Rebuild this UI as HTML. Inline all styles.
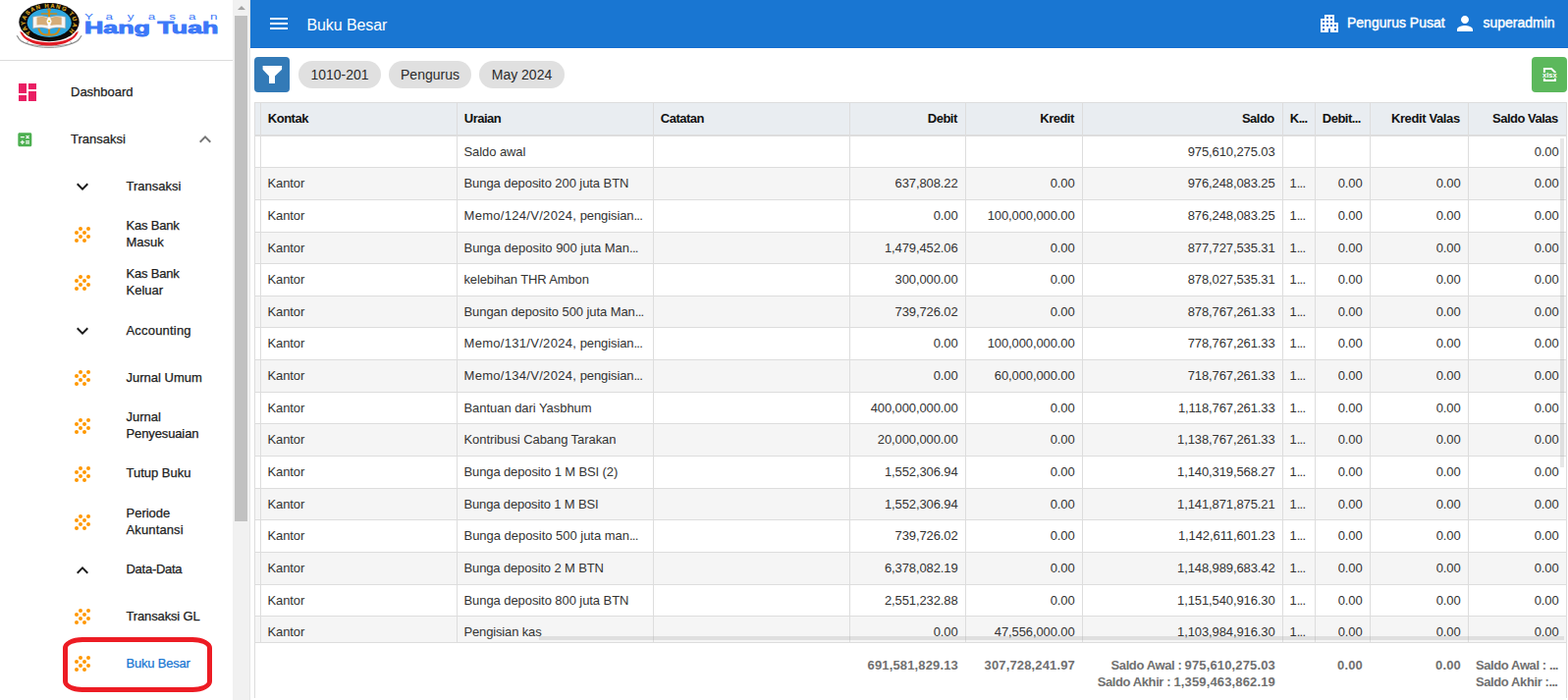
<!DOCTYPE html>
<html lang="id"><head><meta charset="utf-8"><title>Buku Besar</title>
<style>
*{box-sizing:border-box;margin:0;padding:0}
html,body{width:1597px;height:713px;overflow:hidden;background:#fff}
body{font-family:"Liberation Sans",Arial,sans-serif;font-size:13px;color:#212121;position:relative}
#side{position:absolute;left:0;top:0;width:237px;height:713px;background:#fff;overflow:hidden}
#side .div{position:absolute;left:0;top:61px;width:237px;height:1px;background:#dcdcdc}
#side .t1{position:absolute;left:72px;font-size:13px;line-height:20px;white-space:nowrap;-webkit-text-stroke:.25px #212121}
.si{position:absolute;left:72px;width:24px;height:24px}
.st{position:absolute;left:128.5px;font-size:13px;line-height:17px;white-space:nowrap;-webkit-text-stroke:.25px #212121}
.st.act{color:#1976d2;-webkit-text-stroke:.25px #1976d2}
.ic{display:block}
#sbar{position:absolute;left:237px;top:0;width:17px;height:713px;background:#f1f1f1}
#sbar:after{content:"";position:absolute;left:17px;top:0;width:1px;height:713px;background:#e6e6e6}
#sbar .th{position:absolute;left:2px;top:16px;width:13px;height:515px;background:#c1c1c1}
#sbar .ar{position:absolute;left:5px;top:6px;width:0;height:0;border-left:4px solid transparent;border-right:4px solid transparent;border-bottom:4px solid #a3a3a3}
#top{position:absolute;left:255px;top:0;width:1342px;height:49px;background:#1976d2;color:#fff;box-shadow:inset 0 -1px 0 #126cd0}
#top .ttl{position:absolute;left:57.5px;top:15.4px;letter-spacing:-.1px;font-size:16px;line-height:22px;white-space:nowrap}
#top .tx{position:absolute;top:13.3px;font-size:14px;line-height:20px;white-space:nowrap;-webkit-text-stroke:.4px #fff}
#top svg{position:absolute}
#fbtn{position:absolute;left:259px;top:58px;width:36px;height:36px;border-radius:4px;background:#337ab7}
#xbtn{position:absolute;left:1560px;top:58px;width:36px;height:36px;border-radius:4px;background:#5cb85c}
.chip{position:absolute;top:62px;height:28px;border-radius:14px;background:#e0e0e0;font-size:14px;line-height:28px;text-align:center;color:#2b2b2b;white-space:nowrap}
#grid{position:absolute;left:259px;top:104px;width:1337px;height:607px;border:1px solid #ddd;border-bottom:none;overflow:hidden;color:#333}
#grid>*, #body>*, #foot>*{position:absolute}
#grid{--o:-1px}
.hdbg{left:-1px;top:0;width:1337px;height:32px;background:#e9edf1}
#body{left:-1px;top:-1px;width:1337px;height:550px;overflow:hidden}
.row{left:0;width:1337px;background:#fff}
.row.alt{background:#f5f5f5}
.hl{left:0;width:1337px;height:1px;background:#ddd}
.hl2{left:-1px;width:1337px;height:1px;background:#ddd}
.vl{top:-1px;width:1px;height:550px;background:#ddd;margin-left:-1px}
.c{padding:0 7px;white-space:nowrap;overflow:hidden;font-size:13px;letter-spacing:-.1px}
.c.r,.f.r{text-align:right}
.c.r{padding-right:7.4px}
.c u{text-decoration:none}
.c.l{padding-left:6.5px}
.c.h{font-weight:bold;color:#111;letter-spacing:-.5px;margin-left:-.7px}
.c.h.r{margin-left:-1.8px}
.e{font-weight:inherit;letter-spacing:-.7px}
#foot{left:-1px;top:549px;width:1337px;height:59px;background:#fff;border-top:1px solid #ddd}
.f{padding:0 7px;font-weight:bold;color:#707070;font-size:13px;line-height:17px;white-space:nowrap;overflow:hidden;letter-spacing:.15px}
.f em{font-style:normal;letter-spacing:-.4px}
.vsb{left:1329px;top:36px;width:4px;height:335px;background:rgba(160,160,160,.25)}
.hsb{left:289px;top:543px;width:1044px;height:4px;background:rgba(160,160,160,.25)}
#hl{position:absolute;left:64px;top:649px;width:152px;height:56px;border:5px solid #ed1c24;border-radius:20px / 11px}
</style></head><body>
<div id="side">
  <svg id="logo" style="position:absolute;left:0;top:0" width="237" height="60" viewBox="0 0 237 60">
  <defs>
    <path id="ringp" d="M31.600 33.200 A24.400 15.400 0 1 1 68.400 33.200"/>
  </defs>
  <!-- white ribbon -->
  <path d="M17.300 36.300 C25 52.600 75 52.600 82.900 36.300 L80.600 40.500 C74 49 26 49 19.600 40.500 Z" fill="#fcfcfc" stroke="#7d7d7d" stroke-width="0.800" stroke-linejoin="round"/>
  <path d="M27.300 44.600 l1.200 -2.400 M72.900 44.600 l-1.200 -2.400" stroke="#7d7d7d" stroke-width="0.700" fill="none"/>
  <!-- red ribbon -->
  <path d="M20.300 31.800 C25.500 51.400 74.500 51.400 79.900 31.800 L77 33.600 C71.500 46.300 28.500 46.300 23.200 33.600 Z" fill="#e01b24"/>
  <!-- black ring -->
  <ellipse cx="50" cy="22.600" rx="30.700" ry="19.600" fill="#0b0b0b"/>
  <ellipse cx="50.200" cy="23.200" rx="22.600" ry="14.700" fill="#2ea7e0"/>
  <text font-family="Liberation Sans,Arial,sans-serif" font-weight="bold" font-size="5.900" fill="#dba622" stroke="#dba622" stroke-width="0.150"><textPath href="#ringp" startOffset="0" textLength="85" lengthAdjust="spacing">YAYASAN HANG TUAH</textPath></text>
  <!-- anchor -->
  <g fill="none" stroke="#c98a1b" stroke-linecap="round">
    <path d="M50 10.500V35" stroke-width="2.200"/>
    <path d="M42.500 14H57.500" stroke-width="1.700"/>
    <circle cx="50" cy="10.300" r="1.500" stroke-width="1"/>
    <path d="M39.500 29.500 C41.500 35.500 46 36 50 35.200 C54 36 58.500 35.500 60.500 29.500" stroke-width="2.200"/>
  </g>
  <!-- book -->
  <path d="M33.500 17.200 C39 15.600 45.500 15.800 50 17.800 C54.500 15.800 61 15.600 66.700 17.200 V29 C61 27.600 54.500 27.800 50 29.700 C45.500 27.800 39 27.600 33.500 29 Z" fill="#f4f4f4" stroke="#9a9a9a" stroke-width="0.600"/>
  <path d="M37.500 17.500 C41.500 16.600 45.500 16.900 48.500 18.300 V26 C45.500 25 41.500 24.900 37.500 25.600 Z" fill="#d6ad78"/>
  <path d="M62.700 17.500 C58.500 16.600 54.500 16.900 51.500 18.300 V26 C54.500 25 58.500 24.900 62.700 25.600 Z" fill="#d6ad78"/>
  <path d="M49.200 17.600h1.600v11.600h-1.600z" fill="#fff"/>
  <circle cx="50" cy="21.800" r="2.500" fill="#fff"/>
  <path d="M48.600 21h2.800l-1.400 2z" fill="#d8c21a"/>
  <g font-family="Liberation Sans,Arial,sans-serif" font-size="9" fill="#3c78f8" transform="translate(0 19.900) scale(1.5 1)"><text x="57.40" y="0">Y</text><text x="71.67" y="0">a</text><text x="86.53" y="0">y</text><text x="100.47" y="0">a</text><text x="114.87" y="0">s</text><text x="128.00" y="0">a</text><text x="142.67" y="0">n</text></g>
  <text x="85.900" y="34.400" font-family="Liberation Sans,Arial,sans-serif" font-weight="bold" font-size="16.800" fill="#3c78f8" stroke="#3c78f8" stroke-width="0.900" textLength="136.600" lengthAdjust="spacingAndGlyphs">Hang Tuah</text>
</svg>

  <div class="div"></div>
  <svg style="position:absolute;left:16px;top:82px" viewBox="0 0 24 24" width="24" height="24"><path fill="#e91e63" d="M3 13h8V3H3v10zm0 8h8v-6H3v6zm10 0h8V11h-8v10zm0-18v6h8V3h-8z"/></svg>
  <div class="t1" style="top:83.5px">Dashboard</div>
  <svg style="position:absolute;left:15.67px;top:132.67px" viewBox="0 0 24 24" width="18.67" height="18.67"><path fill="#4caf50" d="M19 3H5c-1.1 0-2 .9-2 2v14c0 1.1.9 2 2 2h14c1.1 0 2-.9 2-2V5c0-1.1-.9-2-2-2zm-5.970 4.060L14.090 6l1.410 1.410L16.910 6l1.060 1.060-1.410 1.410 1.410 1.410-1.060 1.060-1.410-1.400-1.410 1.410-1.060-1.060 1.410-1.410-1.410-1.420zm-6.780.66h5v1.500h-5v-1.500zM11.500 16h-2v2H8v-2H6v-1.500h2v-2h1.500v2h2V16zm6.500 1.250h-5v-1.500h5v1.500zm0-2.500h-5v-1.500h5v1.500z"/></svg>
  <div class="t1" style="top:131.5px">Transaksi</div>
  <svg style="position:absolute;left:197px;top:130px" viewBox="0 0 24 24" width="24" height="24"><path fill="#757575" d="M12 8l-6 6 1.41 1.41L12 10.83l4.59 4.58L18 14z"/></svg>
  <div class="si" style="top:178px"><svg class="ic" viewBox="0 0 24 24" width="24" height="24"><path fill="#1c1c1c" d="M16.59 8.59L12 13.17 7.41 8.59 6 10l6 6 6-6z"/></svg></div><div class="st " style="top:181.1px">Transaksi</div><div class="si" style="top:227px"><svg class="ic" viewBox="0 0 24 24" width="24" height="24"><g fill="#ff9800"><circle cx="10" cy="14" r="2"/><circle cx="6" cy="10" r="2"/><circle cx="6" cy="18" r="2"/><circle cx="18" cy="6" r="2"/><circle cx="14" cy="18" r="2"/><circle cx="18" cy="14" r="2"/><circle cx="14" cy="10" r="2"/><circle cx="10" cy="6" r="2"/></g></svg></div><div class="st " style="top:220.8px"><span style="letter-spacing:-0.2px">Kas Bank</span><br>Masuk</div><div class="si" style="top:276px"><svg class="ic" viewBox="0 0 24 24" width="24" height="24"><g fill="#ff9800"><circle cx="10" cy="14" r="2"/><circle cx="6" cy="10" r="2"/><circle cx="6" cy="18" r="2"/><circle cx="18" cy="6" r="2"/><circle cx="14" cy="18" r="2"/><circle cx="18" cy="14" r="2"/><circle cx="14" cy="10" r="2"/><circle cx="10" cy="6" r="2"/></g></svg></div><div class="st " style="top:270.4px"><span style="letter-spacing:-0.2px">Kas Bank</span><br>Keluar</div><div class="si" style="top:325px"><svg class="ic" viewBox="0 0 24 24" width="24" height="24"><path fill="#1c1c1c" d="M16.59 8.59L12 13.17 7.41 8.59 6 10l6 6 6-6z"/></svg></div><div class="st " style="top:328.0px"><span style="letter-spacing:0.19px">Accounting</span></div><div class="si" style="top:373px"><svg class="ic" viewBox="0 0 24 24" width="24" height="24"><g fill="#ff9800"><circle cx="10" cy="14" r="2"/><circle cx="6" cy="10" r="2"/><circle cx="6" cy="18" r="2"/><circle cx="18" cy="6" r="2"/><circle cx="14" cy="18" r="2"/><circle cx="18" cy="14" r="2"/><circle cx="14" cy="10" r="2"/><circle cx="10" cy="6" r="2"/></g></svg></div><div class="st " style="top:375.9px">Jurnal Umum</div><div class="si" style="top:422px"><svg class="ic" viewBox="0 0 24 24" width="24" height="24"><g fill="#ff9800"><circle cx="10" cy="14" r="2"/><circle cx="6" cy="10" r="2"/><circle cx="6" cy="18" r="2"/><circle cx="18" cy="6" r="2"/><circle cx="14" cy="18" r="2"/><circle cx="18" cy="14" r="2"/><circle cx="14" cy="10" r="2"/><circle cx="10" cy="6" r="2"/></g></svg></div><div class="st " style="top:415.8px">Jurnal<br><span style="letter-spacing:-0.12px">Penyesuaian</span></div><div class="si" style="top:471px"><svg class="ic" viewBox="0 0 24 24" width="24" height="24"><g fill="#ff9800"><circle cx="10" cy="14" r="2"/><circle cx="6" cy="10" r="2"/><circle cx="6" cy="18" r="2"/><circle cx="18" cy="6" r="2"/><circle cx="14" cy="18" r="2"/><circle cx="18" cy="14" r="2"/><circle cx="14" cy="10" r="2"/><circle cx="10" cy="6" r="2"/></g></svg></div><div class="st " style="top:473.4px">Tutup Buku</div><div class="si" style="top:520px"><svg class="ic" viewBox="0 0 24 24" width="24" height="24"><g fill="#ff9800"><circle cx="10" cy="14" r="2"/><circle cx="6" cy="10" r="2"/><circle cx="6" cy="18" r="2"/><circle cx="18" cy="6" r="2"/><circle cx="14" cy="18" r="2"/><circle cx="18" cy="14" r="2"/><circle cx="14" cy="10" r="2"/><circle cx="10" cy="6" r="2"/></g></svg></div><div class="st " style="top:514.0px">Periode<br><span style="letter-spacing:0.13px">Akuntansi</span></div><div class="si" style="top:568.5px"><svg class="ic" viewBox="0 0 24 24" width="24" height="24"><path fill="#1c1c1c" d="M12 8l-6 6 1.41 1.41L12 10.83l4.59 4.58L18 14z"/></svg></div><div class="st " style="top:570.9px"><span style="letter-spacing:-0.27px">Data-Data</span></div><div class="si" style="top:616px"><svg class="ic" viewBox="0 0 24 24" width="24" height="24"><g fill="#ff9800"><circle cx="10" cy="14" r="2"/><circle cx="6" cy="10" r="2"/><circle cx="6" cy="18" r="2"/><circle cx="18" cy="6" r="2"/><circle cx="14" cy="18" r="2"/><circle cx="18" cy="14" r="2"/><circle cx="14" cy="10" r="2"/><circle cx="10" cy="6" r="2"/></g></svg></div><div class="st " style="top:618.9px"><span style="letter-spacing:-0.14px">Transaksi GL</span></div><div class="si" style="top:664px"><svg class="ic" viewBox="0 0 24 24" width="24" height="24"><g fill="#ff9800"><circle cx="10" cy="14" r="2"/><circle cx="6" cy="10" r="2"/><circle cx="6" cy="18" r="2"/><circle cx="18" cy="6" r="2"/><circle cx="14" cy="18" r="2"/><circle cx="18" cy="14" r="2"/><circle cx="14" cy="10" r="2"/><circle cx="10" cy="6" r="2"/></g></svg></div><div class="st act" style="top:667.0px"><span style="letter-spacing:-0.21px">Buku Besar</span></div>
  <div id="hl"></div>
</div>
<div id="sbar"><i class="ar"></i><i class="th"></i></div>
<div id="top">
  <svg style="left:17px;top:12px" viewBox="0 0 24 24" width="24" height="24"><path fill="#fff" d="M3 18h18v-2H3v2zm0-5h18v-2H3v2zm0-7v2h18V6H3z"/></svg>
  <div class="ttl">Buku Besar</div>
  <svg style="left:1087px;top:12px" viewBox="0 0 24 24" width="24" height="24"><path fill="#fff" d="M17 11V3H7v4H3v14h8v-4h2v4h8V11h-4zM7 19H5v-2h2v2zm0-4H5v-2h2v2zm0-4H5V9h2v2zm4 4H9v-2h2v2zm0-4H9V9h2v2zm0-4H9V5h2v2zm4 8h-2v-2h2v2zm0-4h-2V9h2v2zm0-4h-2V5h2v2zm4 12h-2v-2h2v2zm0-4h-2v-2h2v2z"/></svg>
  <div class="tx" style="left:1117px">Pengurus Pusat</div>
  <svg style="left:1225px;top:12px" viewBox="0 0 24 24" width="24" height="24"><path fill="#fff" d="M12 12c2.21 0 4-1.790 4-4s-1.790-4-4-4-4 1.790-4 4 1.790 4 4 4zm0 2c-2.670 0-8 1.340-8 4v2h16v-2c0-2.660-5.330-4-8-4z"/></svg>
  <div class="tx" style="left:1255.5px">superadmin</div>
</div>
<div id="fbtn"><svg viewBox="0 0 36 36" width="36" height="36" style="display:block"><path fill="#fff" d="M8.600 9h19.500v3.700l-7.100 6.800v7.500h-6v-7.500l-6.400-6.800z"/></svg></div>
<div class="chip" style="left:304px;width:84px">1010-201</div>
<div class="chip" style="left:396px;width:84px">Pengurus</div>
<div class="chip" style="left:488px;width:87px">May 2024</div>
<div id="xbtn"><svg viewBox="0 0 36 36" width="36" height="36" style="display:block"><path fill="none" stroke="#fff" stroke-width="2" d="M12.900 16V11.900H20.100L23.900 15.700V16M12.900 21.800V24H23.900V21.800"/><text x="18.300" y="21.200" font-family="Liberation Sans,Arial,sans-serif" font-weight="bold" font-size="6.800" fill="#fff" text-anchor="middle" textLength="14.600" lengthAdjust="spacingAndGlyphs">xlsx</text></svg></div>

<div id="grid">
  <div class="hdbg"></div>
  <div class="c l h" style="left:7px;top:0px;width:199px;height:31px;line-height:31px;"><span>Kontak</span></div><div class="c l h" style="left:207px;top:0px;width:199px;height:31px;line-height:31px;"><span>Uraian</span></div><div class="c l h" style="left:407px;top:0px;width:199px;height:31px;line-height:31px;"><span>Catatan</span></div><div class="c r h" style="left:607px;top:0px;width:117px;height:31px;line-height:31px;"><span>Debit</span></div><div class="c r h" style="left:725px;top:0px;width:118px;height:31px;line-height:31px;"><span>Kredit</span></div><div class="c r h" style="left:844px;top:0px;width:203px;height:31px;line-height:31px;"><span>Saldo</span></div><div class="c l h" style="left:1048px;top:0px;width:32px;height:31px;line-height:31px;"><span>K<b class="e">...</b></span></div><div class="c l h" style="left:1081px;top:0px;width:55px;height:31px;line-height:31px;"><span>Debit<b class="e">...</b></span></div><div class="c r h" style="left:1137px;top:0px;width:99px;height:31px;line-height:31px;"><span style="letter-spacing:-.38px">Kredit Valas</span></div><div class="c r h" style="left:1237px;top:0px;width:99px;height:31px;line-height:31px;"><span>Saldo Valas</span></div>
  <div id="body">
  <div class="row" style="top:35px;height:31px"></div><i class="hl" style="top:66px"></i><div class="c l " style="left:207px;top:35px;width:199px;height:31px;line-height:31px;"><span style="letter-spacing:-0.08px">Saldo awal</span></div><div class="c r " style="left:844px;top:35px;width:203px;height:31px;line-height:31px;"><span>975,610,275.03</span></div><div class="c r " style="left:1237px;top:35px;width:99px;height:31px;line-height:31px;"><span>0.00</span></div><div class="row alt" style="top:67px;height:32px"></div><i class="hl" style="top:99px"></i><div class="c l " style="left:7px;top:67px;width:199px;height:32px;line-height:32px;"><span>Kantor</span></div><div class="c l " style="left:207px;top:67px;width:199px;height:32px;line-height:32px;"><span style="letter-spacing:-0.074px">Bunga deposito 200 juta BTN</span></div><div class="c r " style="left:607px;top:67px;width:117px;height:32px;line-height:32px;"><span>637,808.22</span></div><div class="c r " style="left:725px;top:67px;width:118px;height:32px;line-height:32px;"><span>0.00</span></div><div class="c r " style="left:844px;top:67px;width:203px;height:32px;line-height:32px;"><span>976,248,083.25</span></div><div class="c l " style="left:1048px;top:67px;width:32px;height:32px;line-height:32px;"><span>1<b class="e">...</b></span></div><div class="c r " style="left:1081px;top:67px;width:55px;height:32px;line-height:32px;"><span>0.00</span></div><div class="c r " style="left:1137px;top:67px;width:99px;height:32px;line-height:32px;"><span>0.00</span></div><div class="c r " style="left:1237px;top:67px;width:99px;height:32px;line-height:32px;"><span>0.00</span></div><div class="row" style="top:100px;height:32px"></div><i class="hl" style="top:132px"></i><div class="c l " style="left:7px;top:100px;width:199px;height:32px;line-height:32px;"><span>Kantor</span></div><div class="c l " style="left:207px;top:100px;width:199px;height:32px;line-height:32px;"><span><u style="letter-spacing:.3px">Memo/124/V/2024,</u> pengisian<b class="e">...</b></span></div><div class="c r " style="left:607px;top:100px;width:117px;height:32px;line-height:32px;"><span>0.00</span></div><div class="c r " style="left:725px;top:100px;width:118px;height:32px;line-height:32px;"><span>100,000,000.00</span></div><div class="c r " style="left:844px;top:100px;width:203px;height:32px;line-height:32px;"><span>876,248,083.25</span></div><div class="c l " style="left:1048px;top:100px;width:32px;height:32px;line-height:32px;"><span>1<b class="e">...</b></span></div><div class="c r " style="left:1081px;top:100px;width:55px;height:32px;line-height:32px;"><span>0.00</span></div><div class="c r " style="left:1137px;top:100px;width:99px;height:32px;line-height:32px;"><span>0.00</span></div><div class="c r " style="left:1237px;top:100px;width:99px;height:32px;line-height:32px;"><span>0.00</span></div><div class="row alt" style="top:133px;height:31px"></div><i class="hl" style="top:164px"></i><div class="c l " style="left:7px;top:133px;width:199px;height:31px;line-height:31px;"><span>Kantor</span></div><div class="c l " style="left:207px;top:133px;width:199px;height:31px;line-height:31px;"><span style="letter-spacing:-0.022px">Bunga deposito 900 juta Man<b class="e">...</b></span></div><div class="c r " style="left:607px;top:133px;width:117px;height:31px;line-height:31px;"><span>1,479,452.06</span></div><div class="c r " style="left:725px;top:133px;width:118px;height:31px;line-height:31px;"><span>0.00</span></div><div class="c r " style="left:844px;top:133px;width:203px;height:31px;line-height:31px;"><span>877,727,535.31</span></div><div class="c l " style="left:1048px;top:133px;width:32px;height:31px;line-height:31px;"><span>1<b class="e">...</b></span></div><div class="c r " style="left:1081px;top:133px;width:55px;height:31px;line-height:31px;"><span>0.00</span></div><div class="c r " style="left:1137px;top:133px;width:99px;height:31px;line-height:31px;"><span>0.00</span></div><div class="c r " style="left:1237px;top:133px;width:99px;height:31px;line-height:31px;"><span>0.00</span></div><div class="row" style="top:165px;height:32px"></div><i class="hl" style="top:197px"></i><div class="c l " style="left:7px;top:165px;width:199px;height:32px;line-height:32px;"><span>Kantor</span></div><div class="c l " style="left:207px;top:165px;width:199px;height:32px;line-height:32px;"><span style="letter-spacing:-0.137px">kelebihan THR Ambon</span></div><div class="c r " style="left:607px;top:165px;width:117px;height:32px;line-height:32px;"><span>300,000.00</span></div><div class="c r " style="left:725px;top:165px;width:118px;height:32px;line-height:32px;"><span>0.00</span></div><div class="c r " style="left:844px;top:165px;width:203px;height:32px;line-height:32px;"><span>878,027,535.31</span></div><div class="c l " style="left:1048px;top:165px;width:32px;height:32px;line-height:32px;"><span>1<b class="e">...</b></span></div><div class="c r " style="left:1081px;top:165px;width:55px;height:32px;line-height:32px;"><span>0.00</span></div><div class="c r " style="left:1137px;top:165px;width:99px;height:32px;line-height:32px;"><span>0.00</span></div><div class="c r " style="left:1237px;top:165px;width:99px;height:32px;line-height:32px;"><span>0.00</span></div><div class="row alt" style="top:198px;height:31px"></div><i class="hl" style="top:229px"></i><div class="c l " style="left:7px;top:198px;width:199px;height:31px;line-height:31px;"><span>Kantor</span></div><div class="c l " style="left:207px;top:198px;width:199px;height:31px;line-height:31px;"><span style="letter-spacing:-0.075px">Bungan deposito 500 juta Man<b class="e">...</b></span></div><div class="c r " style="left:607px;top:198px;width:117px;height:31px;line-height:31px;"><span>739,726.02</span></div><div class="c r " style="left:725px;top:198px;width:118px;height:31px;line-height:31px;"><span>0.00</span></div><div class="c r " style="left:844px;top:198px;width:203px;height:31px;line-height:31px;"><span>878,767,261.33</span></div><div class="c l " style="left:1048px;top:198px;width:32px;height:31px;line-height:31px;"><span>1<b class="e">...</b></span></div><div class="c r " style="left:1081px;top:198px;width:55px;height:31px;line-height:31px;"><span>0.00</span></div><div class="c r " style="left:1137px;top:198px;width:99px;height:31px;line-height:31px;"><span>0.00</span></div><div class="c r " style="left:1237px;top:198px;width:99px;height:31px;line-height:31px;"><span>0.00</span></div><div class="row" style="top:230px;height:32px"></div><i class="hl" style="top:262px"></i><div class="c l " style="left:7px;top:230px;width:199px;height:32px;line-height:32px;"><span>Kantor</span></div><div class="c l " style="left:207px;top:230px;width:199px;height:32px;line-height:32px;"><span><u style="letter-spacing:.3px">Memo/131/V/2024,</u> pengisian<b class="e">...</b></span></div><div class="c r " style="left:607px;top:230px;width:117px;height:32px;line-height:32px;"><span>0.00</span></div><div class="c r " style="left:725px;top:230px;width:118px;height:32px;line-height:32px;"><span>100,000,000.00</span></div><div class="c r " style="left:844px;top:230px;width:203px;height:32px;line-height:32px;"><span>778,767,261.33</span></div><div class="c l " style="left:1048px;top:230px;width:32px;height:32px;line-height:32px;"><span>1<b class="e">...</b></span></div><div class="c r " style="left:1081px;top:230px;width:55px;height:32px;line-height:32px;"><span>0.00</span></div><div class="c r " style="left:1137px;top:230px;width:99px;height:32px;line-height:32px;"><span>0.00</span></div><div class="c r " style="left:1237px;top:230px;width:99px;height:32px;line-height:32px;"><span>0.00</span></div><div class="row alt" style="top:263px;height:32px"></div><i class="hl" style="top:295px"></i><div class="c l " style="left:7px;top:263px;width:199px;height:32px;line-height:32px;"><span>Kantor</span></div><div class="c l " style="left:207px;top:263px;width:199px;height:32px;line-height:32px;"><span><u style="letter-spacing:.3px">Memo/134/V/2024,</u> pengisian<b class="e">...</b></span></div><div class="c r " style="left:607px;top:263px;width:117px;height:32px;line-height:32px;"><span>0.00</span></div><div class="c r " style="left:725px;top:263px;width:118px;height:32px;line-height:32px;"><span>60,000,000.00</span></div><div class="c r " style="left:844px;top:263px;width:203px;height:32px;line-height:32px;"><span>718,767,261.33</span></div><div class="c l " style="left:1048px;top:263px;width:32px;height:32px;line-height:32px;"><span>1<b class="e">...</b></span></div><div class="c r " style="left:1081px;top:263px;width:55px;height:32px;line-height:32px;"><span>0.00</span></div><div class="c r " style="left:1137px;top:263px;width:99px;height:32px;line-height:32px;"><span>0.00</span></div><div class="c r " style="left:1237px;top:263px;width:99px;height:32px;line-height:32px;"><span>0.00</span></div><div class="row" style="top:296px;height:31px"></div><i class="hl" style="top:327px"></i><div class="c l " style="left:7px;top:296px;width:199px;height:31px;line-height:31px;"><span>Kantor</span></div><div class="c l " style="left:207px;top:296px;width:199px;height:31px;line-height:31px;"><span style="letter-spacing:-0.05px">Bantuan dari Yasbhum</span></div><div class="c r " style="left:607px;top:296px;width:117px;height:31px;line-height:31px;"><span>400,000,000.00</span></div><div class="c r " style="left:725px;top:296px;width:118px;height:31px;line-height:31px;"><span>0.00</span></div><div class="c r " style="left:844px;top:296px;width:203px;height:31px;line-height:31px;"><span>1,118,767,261.33</span></div><div class="c l " style="left:1048px;top:296px;width:32px;height:31px;line-height:31px;"><span>1<b class="e">...</b></span></div><div class="c r " style="left:1081px;top:296px;width:55px;height:31px;line-height:31px;"><span>0.00</span></div><div class="c r " style="left:1137px;top:296px;width:99px;height:31px;line-height:31px;"><span>0.00</span></div><div class="c r " style="left:1237px;top:296px;width:99px;height:31px;line-height:31px;"><span>0.00</span></div><div class="row alt" style="top:328px;height:32px"></div><i class="hl" style="top:360px"></i><div class="c l " style="left:7px;top:328px;width:199px;height:32px;line-height:32px;"><span>Kantor</span></div><div class="c l " style="left:207px;top:328px;width:199px;height:32px;line-height:32px;"><span style="letter-spacing:-0.068px">Kontribusi Cabang Tarakan</span></div><div class="c r " style="left:607px;top:328px;width:117px;height:32px;line-height:32px;"><span>20,000,000.00</span></div><div class="c r " style="left:725px;top:328px;width:118px;height:32px;line-height:32px;"><span>0.00</span></div><div class="c r " style="left:844px;top:328px;width:203px;height:32px;line-height:32px;"><span>1,138,767,261.33</span></div><div class="c l " style="left:1048px;top:328px;width:32px;height:32px;line-height:32px;"><span>1<b class="e">...</b></span></div><div class="c r " style="left:1081px;top:328px;width:55px;height:32px;line-height:32px;"><span>0.00</span></div><div class="c r " style="left:1137px;top:328px;width:99px;height:32px;line-height:32px;"><span>0.00</span></div><div class="c r " style="left:1237px;top:328px;width:99px;height:32px;line-height:32px;"><span>0.00</span></div><div class="row" style="top:361px;height:32px"></div><i class="hl" style="top:393px"></i><div class="c l " style="left:7px;top:361px;width:199px;height:32px;line-height:32px;"><span>Kantor</span></div><div class="c l " style="left:207px;top:361px;width:199px;height:32px;line-height:32px;"><span style="letter-spacing:-0.119px">Bunga deposito 1 M BSI (2)</span></div><div class="c r " style="left:607px;top:361px;width:117px;height:32px;line-height:32px;"><span>1,552,306.94</span></div><div class="c r " style="left:725px;top:361px;width:118px;height:32px;line-height:32px;"><span>0.00</span></div><div class="c r " style="left:844px;top:361px;width:203px;height:32px;line-height:32px;"><span>1,140,319,568.27</span></div><div class="c l " style="left:1048px;top:361px;width:32px;height:32px;line-height:32px;"><span>1<b class="e">...</b></span></div><div class="c r " style="left:1081px;top:361px;width:55px;height:32px;line-height:32px;"><span>0.00</span></div><div class="c r " style="left:1137px;top:361px;width:99px;height:32px;line-height:32px;"><span>0.00</span></div><div class="c r " style="left:1237px;top:361px;width:99px;height:32px;line-height:32px;"><span>0.00</span></div><div class="row alt" style="top:394px;height:31px"></div><i class="hl" style="top:425px"></i><div class="c l " style="left:7px;top:394px;width:199px;height:31px;line-height:31px;"><span>Kantor</span></div><div class="c l " style="left:207px;top:394px;width:199px;height:31px;line-height:31px;"><span style="letter-spacing:-0.15px">Bunga deposito 1 M BSI</span></div><div class="c r " style="left:607px;top:394px;width:117px;height:31px;line-height:31px;"><span>1,552,306.94</span></div><div class="c r " style="left:725px;top:394px;width:118px;height:31px;line-height:31px;"><span>0.00</span></div><div class="c r " style="left:844px;top:394px;width:203px;height:31px;line-height:31px;"><span>1,141,871,875.21</span></div><div class="c l " style="left:1048px;top:394px;width:32px;height:31px;line-height:31px;"><span>1<b class="e">...</b></span></div><div class="c r " style="left:1081px;top:394px;width:55px;height:31px;line-height:31px;"><span>0.00</span></div><div class="c r " style="left:1137px;top:394px;width:99px;height:31px;line-height:31px;"><span>0.00</span></div><div class="c r " style="left:1237px;top:394px;width:99px;height:31px;line-height:31px;"><span>0.00</span></div><div class="row" style="top:426px;height:32px"></div><i class="hl" style="top:458px"></i><div class="c l " style="left:7px;top:426px;width:199px;height:32px;line-height:32px;"><span>Kantor</span></div><div class="c l " style="left:207px;top:426px;width:199px;height:32px;line-height:32px;"><span style="letter-spacing:-0.026px">Bunga deposito 500 juta man<b class="e">...</b></span></div><div class="c r " style="left:607px;top:426px;width:117px;height:32px;line-height:32px;"><span>739,726.02</span></div><div class="c r " style="left:725px;top:426px;width:118px;height:32px;line-height:32px;"><span>0.00</span></div><div class="c r " style="left:844px;top:426px;width:203px;height:32px;line-height:32px;"><span>1,142,611,601.23</span></div><div class="c l " style="left:1048px;top:426px;width:32px;height:32px;line-height:32px;"><span>1<b class="e">...</b></span></div><div class="c r " style="left:1081px;top:426px;width:55px;height:32px;line-height:32px;"><span>0.00</span></div><div class="c r " style="left:1137px;top:426px;width:99px;height:32px;line-height:32px;"><span>0.00</span></div><div class="c r " style="left:1237px;top:426px;width:99px;height:32px;line-height:32px;"><span>0.00</span></div><div class="row alt" style="top:459px;height:32px"></div><i class="hl" style="top:491px"></i><div class="c l " style="left:7px;top:459px;width:199px;height:32px;line-height:32px;"><span>Kantor</span></div><div class="c l " style="left:207px;top:459px;width:199px;height:32px;line-height:32px;"><span style="letter-spacing:-0.136px">Bunga deposito 2 M BTN</span></div><div class="c r " style="left:607px;top:459px;width:117px;height:32px;line-height:32px;"><span>6,378,082.19</span></div><div class="c r " style="left:725px;top:459px;width:118px;height:32px;line-height:32px;"><span>0.00</span></div><div class="c r " style="left:844px;top:459px;width:203px;height:32px;line-height:32px;"><span>1,148,989,683.42</span></div><div class="c l " style="left:1048px;top:459px;width:32px;height:32px;line-height:32px;"><span>1<b class="e">...</b></span></div><div class="c r " style="left:1081px;top:459px;width:55px;height:32px;line-height:32px;"><span>0.00</span></div><div class="c r " style="left:1137px;top:459px;width:99px;height:32px;line-height:32px;"><span>0.00</span></div><div class="c r " style="left:1237px;top:459px;width:99px;height:32px;line-height:32px;"><span>0.00</span></div><div class="row" style="top:492px;height:31px"></div><i class="hl" style="top:523px"></i><div class="c l " style="left:7px;top:492px;width:199px;height:31px;line-height:31px;"><span>Kantor</span></div><div class="c l " style="left:207px;top:492px;width:199px;height:31px;line-height:31px;"><span style="letter-spacing:-0.074px">Bunga deposito 800 juta BTN</span></div><div class="c r " style="left:607px;top:492px;width:117px;height:31px;line-height:31px;"><span>2,551,232.88</span></div><div class="c r " style="left:725px;top:492px;width:118px;height:31px;line-height:31px;"><span>0.00</span></div><div class="c r " style="left:844px;top:492px;width:203px;height:31px;line-height:31px;"><span>1,151,540,916.30</span></div><div class="c l " style="left:1048px;top:492px;width:32px;height:31px;line-height:31px;"><span>1<b class="e">...</b></span></div><div class="c r " style="left:1081px;top:492px;width:55px;height:31px;line-height:31px;"><span>0.00</span></div><div class="c r " style="left:1137px;top:492px;width:99px;height:31px;line-height:31px;"><span>0.00</span></div><div class="c r " style="left:1237px;top:492px;width:99px;height:31px;line-height:31px;"><span>0.00</span></div><div class="row alt" style="top:524px;height:32px"></div><i class="hl" style="top:556px"></i><div class="c l " style="left:7px;top:524px;width:199px;height:32px;line-height:32px;"><span>Kantor</span></div><div class="c l " style="left:207px;top:524px;width:199px;height:32px;line-height:32px;"><span style="letter-spacing:-0.146px">Pengisian kas</span></div><div class="c r " style="left:607px;top:524px;width:117px;height:32px;line-height:32px;"><span>0.00</span></div><div class="c r " style="left:725px;top:524px;width:118px;height:32px;line-height:32px;"><span>47,556,000.00</span></div><div class="c r " style="left:844px;top:524px;width:203px;height:32px;line-height:32px;"><span>1,103,984,916.30</span></div><div class="c l " style="left:1048px;top:524px;width:32px;height:32px;line-height:32px;"><span>1<b class="e">...</b></span></div><div class="c r " style="left:1081px;top:524px;width:55px;height:32px;line-height:32px;"><span>0.00</span></div><div class="c r " style="left:1137px;top:524px;width:99px;height:32px;line-height:32px;"><span>0.00</span></div><div class="c r " style="left:1237px;top:524px;width:99px;height:32px;line-height:32px;"><span>0.00</span></div>
  </div>
  <i class="vl" style="left:6px"></i><i class="vl" style="left:206px"></i><i class="vl" style="left:406px"></i><i class="vl" style="left:606px"></i><i class="vl" style="left:724px"></i><i class="vl" style="left:843px"></i><i class="vl" style="left:1047px"></i><i class="vl" style="left:1080px"></i><i class="vl" style="left:1136px"></i><i class="vl" style="left:1236px"></i>
  <i class="hl2" style="top:32px;height:2px"></i>
  <div id="foot">
    <div class="f r" style="left:607px;width:117px;top:14px"><span>691,581,829.13</span></div>
    <div class="f r" style="left:725px;width:118px;top:14px"><span>307,728,241.97</span></div>
    <div class="f r" style="left:844px;width:203px;top:14px"><span><em>Saldo Awal : </em>975,610,275.03</span></div>
    <div class="f r" style="left:844px;width:203px;top:31px"><span><em>Saldo Akhir : </em>1,359,463,862.19</span></div>
    <div class="f r" style="left:1081px;width:55px;top:14px"><span>0.00</span></div>
    <div class="f r" style="left:1137px;width:99px;top:14px"><span>0.00</span></div>
    <div class="f l" style="left:1237px;width:99px;top:14px"><span><em>Saldo Awal : </em><b class="e">...</b></span></div>
    <div class="f l" style="left:1237px;width:99px;top:31px"><span><em>Saldo Akhir :</em><b class="e">...</b></span></div>
  </div>
  <i class="vsb"></i><i class="hsb"></i>
</div>

</body></html>
